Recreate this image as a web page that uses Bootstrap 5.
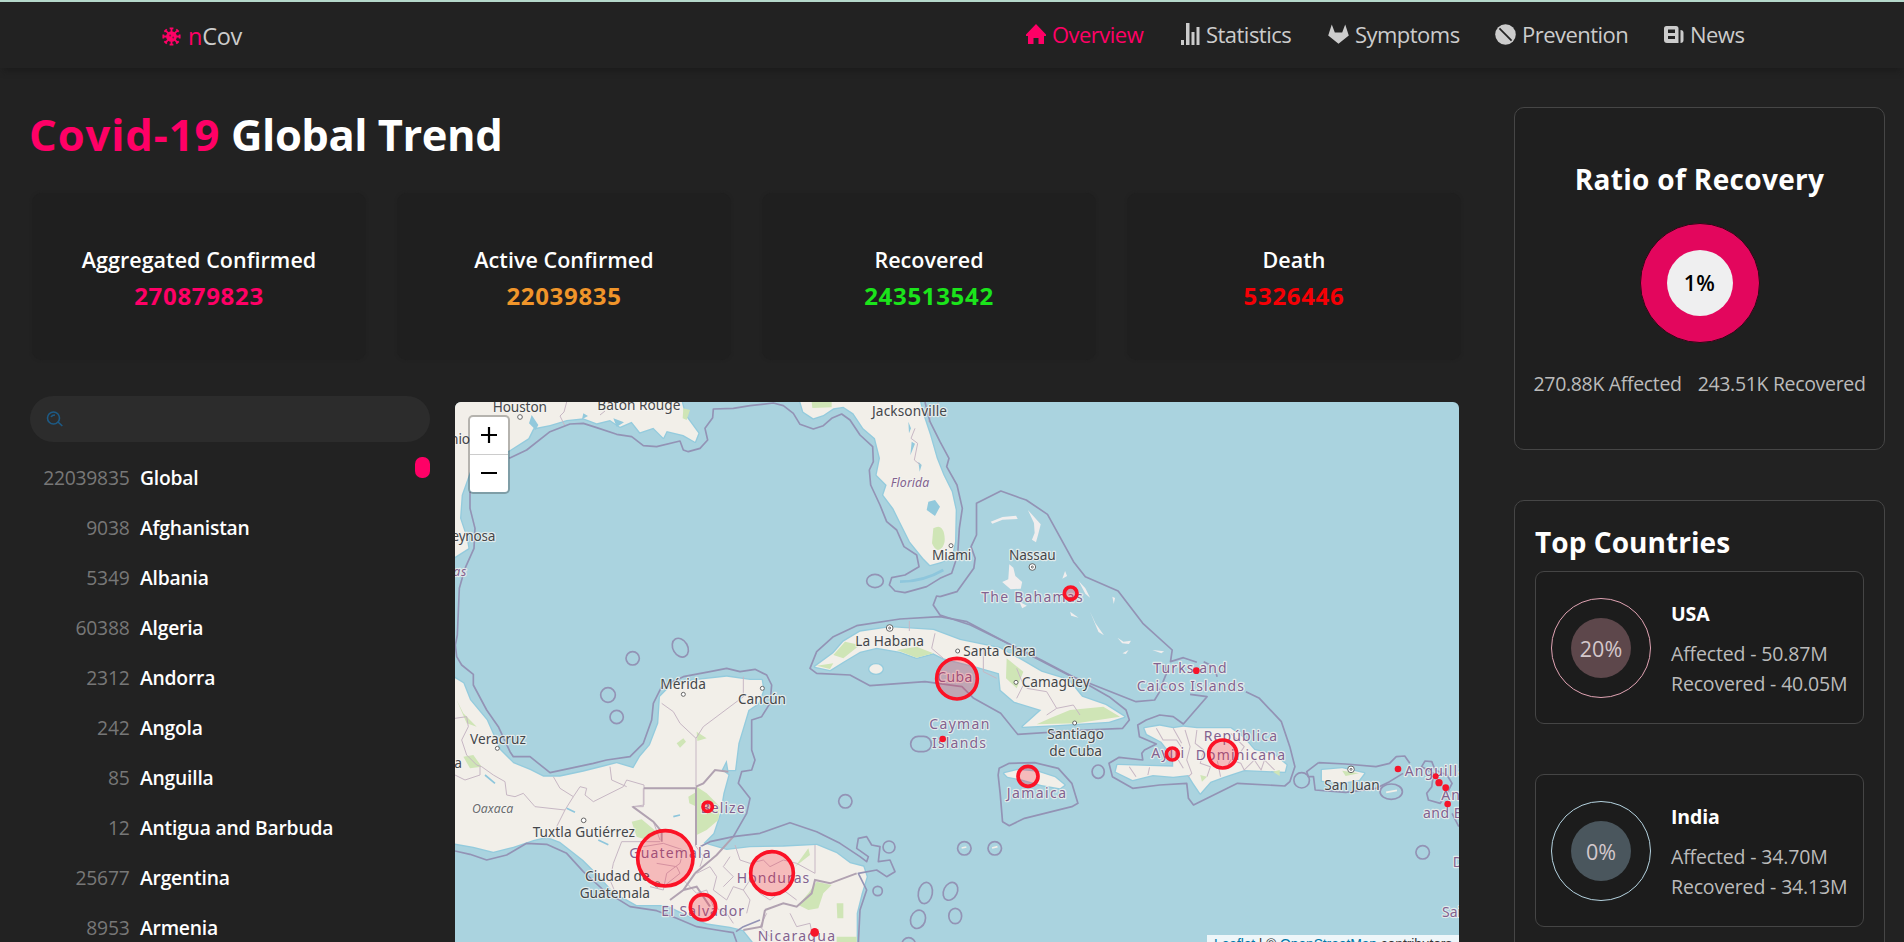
<!DOCTYPE html>
<html lang="en">
<head>
<meta charset="utf-8">
<title>nCov</title>
<link rel="stylesheet" href="https://cdn.jsdelivr.net/npm/bootstrap@5.3.0/dist/css/bootstrap.min.css">
<style>
:root{--pink:#ff0066}
body{background:#222;color:#fff;font-family:"Open Sans","Noto Sans",sans-serif;height:942px;overflow:hidden;letter-spacing:-.02em}
.topline{height:2px;background:#b5d8cb}
.site-nav{height:66px;padding:0 0 0 162px;box-shadow:0 7px 5px -3px #1d1d1d;position:relative}
.brand-link{font-size:23.5px;width:864px;gap:7px;color:#ccc;line-height:1;padding-top:3px;letter-spacing:-.012em}
.top-link{font-size:22px;gap:6px;color:#ccc;white-space:nowrap;letter-spacing:-.024em;padding-bottom:2px}
.top-link svg{flex:none}
.pink{color:var(--pink)!important}
.page-main{width:1477px;padding-left:17px}
.page-title{font-size:43.5px;line-height:52px;margin:41px 0 32px 12px;font-weight:700;letter-spacing:-.011em}
.page-title .pink{letter-spacing:.021em}
.stat-box{margin:0 16px 0 15px;height:167px;padding-top:49px;background:#1f1f1f;border-radius:10px;text-align:center;box-shadow:0 0 3px #202020}
.stat-box h2{font-size:21.5px;font-weight:600;line-height:36px;margin:0;letter-spacing:.002em}
.stat-box p{font-size:24px;font-weight:700;line-height:36px;margin:0;letter-spacing:.028em}
.side-list{width:400px;margin:36px 25px 0 13px}
.search-pill{height:45.5px;border-radius:23px;background:#2c2c2c;padding-left:16px}
.list-area{margin-top:11.5px;position:relative}
.list-row{height:50px;line-height:50px;font-size:19.3px;gap:10.5px}
.list-row span{width:99.5px;text-align:right;color:#777;letter-spacing:-.012em}
.list-row b{font-weight:650;letter-spacing:-.011em}
.thumb{position:absolute;right:0;top:4px;width:15px;height:21px;border-radius:7px;background:var(--pink)}
.map-box{width:1004px;height:540px;margin-top:42px;border-radius:6px 6px 0 0;overflow:hidden;position:relative;background:#aad3df}
.map-box>svg{display:block}
.zoom-ctl{position:absolute;left:13px;top:13px;width:42px;border:2px solid rgba(0,0,0,.25);border-radius:5px;background:#fff;background-clip:padding-box;overflow:hidden}
.zoom-ctl div{height:37.500px}
.zoom-ctl div:first-child{border-bottom:1px solid #ccc}
.attrib{position:absolute;right:0;bottom:-12px;height:19px;width:252px;padding-left:7px;background:rgba(255,255,255,.8);color:#333;font:14px/19px "Liberation Sans",sans-serif;letter-spacing:-.01em;white-space:nowrap}
.attrib a{color:#0078a8;text-decoration:none}
.page-aside{width:371px;margin-left:37px}
.content-area{height:874px;overflow:hidden}
.panel{border:1px solid #464646;border-radius:10px;background:#1f1f1f}
.panel h3{font-size:28px;font-weight:700;margin:0;line-height:36px;white-space:nowrap;letter-spacing:.002em}
.ratio-panel{height:343px;margin-top:39px;padding-top:53px}
.ratio-panel h3{letter-spacing:.012em}
.donut{width:120px;height:120px;border-radius:50%;background:#e3065d;border:1px solid #300716;margin:26px auto 0}
.donut div{width:66px;height:66px;border-radius:50%;background:#efeff0;color:#000;font-size:21.5px;font-weight:600;line-height:66px;letter-spacing:.01em}
.ratio-text{font-size:19.5px;line-height:30px;margin-top:26px;color:#bbb;gap:16px;white-space:nowrap;letter-spacing:-.017em}
.top-panel{height:500px;margin-top:50px;padding:23px 20px}
.country-box{border:1px solid #454545;border-radius:9px;background:#1c1c1c;height:152.500px;margin-bottom:50.500px;padding:1px 0 0 15px}
.ring{width:100px;height:100px;border-radius:50%;border:1px solid;margin-right:20px;flex:none}
.ring div{width:60px;height:60px;border-radius:50%;font-size:21.5px;line-height:62px;text-align:center;color:#d4c8cc;letter-spacing:0}
.country-text{font-size:19.5px;line-height:30px;color:#bbb;white-space:nowrap;letter-spacing:-.008em;padding-top:2px}
.country-text b{display:block;color:#fff;font-size:19.500px;margin-bottom:10px}
.lab text{font-family:"Noto Sans","Open Sans",sans-serif;font-size:41px;fill:#45474a;stroke:#f4f3f0;stroke-opacity:.75;stroke-width:7px;paint-order:stroke;stroke-linejoin:round;letter-spacing:0}
.lab .ctry{fill:#83628f;font-size:42px}
.lab .ital{font-style:italic;font-size:37px}
.sea{fill:none;stroke:#9393b5;stroke-width:5;stroke-linejoin:round}
.adm{fill:none;stroke:#c7b7c4;stroke-width:3;stroke-linejoin:round}
.bord{fill:none;stroke:#b1a2b1;stroke-width:6}
.land{fill:#f2efe9;stroke:#94cbdd;stroke-width:8;stroke-linejoin:round;paint-order:stroke}
.grn{fill:#cfe5b6}
.pin{fill:#ff1e33;fill-opacity:.25;stroke:#fb1226;stroke-width:11}
.dot{fill:#f6142a}
.town{fill:#fff;stroke:#666;stroke-width:3}
</style>
</head>
<body>
<div class="topline"></div>
<nav class="site-nav d-flex align-items-center">
  <a class="brand-link d-flex align-items-center text-decoration-none" href="#">
    <svg width="19" height="19" viewBox="0 0 20 20" fill="none" stroke="#ff0066" stroke-width="2.1"><circle cx="10" cy="10" r="4.6" fill="#ff0066"/><path d="M10 1v18M1 10h18M3.6 3.6l12.8 12.8M16.4 3.6 3.6 16.4M8 1.4h4M8 18.6h4M1.4 8v4M18.6 8v4M2.5 5l2.6-2.6M15 2.4 17.6 5M2.5 15l2.6 2.6M15 17.6l2.6-2.6" stroke-width="1.9"/><circle cx="8.6" cy="9" r="1" fill="#7b153e" stroke="none"/><circle cx="11.8" cy="11" r="1" fill="#7b153e" stroke="none"/></svg>
    <span><span class="pink">n</span>Cov</span>
  </a>
  <a class="top-link pink d-flex align-items-center text-decoration-none" style="width:155px" href="#"><svg width="20" height="20" viewBox="0 0 20 20" fill="currentColor"><path d="M10 0 20 10.5V12h-2v8h-5.500v-6h-5v6H2v-8H0v-1.500z"/></svg>Overview</a>
  <a class="top-link d-flex align-items-center text-decoration-none" style="width:147px" href="#"><svg width="19" height="22" viewBox="0 0 19 22" fill="currentColor"><path d="M0 17h3v5H0zM5 0h3.500v22H5zM10.500 9h3v13h-3zM15.500 4h3v18h-3z"/></svg>Statistics</a>
  <a class="top-link d-flex align-items-center text-decoration-none" style="width:167px" href="#"><svg width="21" height="20" viewBox="0 0 20 19" fill="currentColor"><path d="M3.600.5 6.500 8h7L16.400.5 19.800 11 10 18.800.2 11z"/></svg>Symptoms</a>
  <a class="top-link d-flex align-items-center text-decoration-none" style="width:169px" href="#"><svg width="21" height="21" viewBox="0 0 20 20"><circle cx="10" cy="10" r="9.800" fill="currentColor"/><path d="m4.200 4.200 11.600 11.600" stroke="#222" stroke-width="1.700"/></svg>Prevention</a>
  <a class="top-link d-flex align-items-center text-decoration-none" href="#"><svg width="20" height="17" viewBox="0 0 20 17" fill="currentColor"><path fill-rule="evenodd" d="M2.500 0H12q2.500 0 2.500 2.500V17H3q-3 0-3-3V2.500Q0 0 2.500 0zM4 3.500V7h7V3.500zM4 10v3h7v-3z"/><path d="M16.500 4Q19.500 4 19.500 7v7q0 3-3 3z"/></svg>News</a>
</nav>

<div class="content-area d-flex align-items-start">
<main class="page-main">
  <h1 class="page-title"><span class="pink">Covid-19</span> Global Trend</h1>
  <div class="row g-0">
    <div class="col-3"><div class="stat-box"><h2>Aggregated Confirmed</h2><p class="pink">270879823</p></div></div>
    <div class="col-3"><div class="stat-box"><h2>Active Confirmed</h2><p style="color:#f0952a">22039835</p></div></div>
    <div class="col-3"><div class="stat-box"><h2>Recovered</h2><p style="color:#1be41b">243513542</p></div></div>
    <div class="col-3"><div class="stat-box"><h2>Death</h2><p style="color:#f50005">5326446</p></div></div>
  </div>
  <div class="d-flex">
    <section class="side-list">
      <div class="search-pill d-flex align-items-center">
        <svg width="17" height="16" viewBox="0 0 17 16" fill="none" stroke="#1d5a85" stroke-width="1.600"><circle cx="7.500" cy="7" r="6"/><path d="m12 11 4.300 4M5 6q1-2 4-2"/></svg>
      </div>
      <div class="list-area">
        <div class="thumb"></div>
        <div class="list-row d-flex"><span>22039835</span><b>Global</b></div>
        <div class="list-row d-flex"><span>9038</span><b>Afghanistan</b></div>
        <div class="list-row d-flex"><span>5349</span><b>Albania</b></div>
        <div class="list-row d-flex"><span>60388</span><b>Algeria</b></div>
        <div class="list-row d-flex"><span>2312</span><b>Andorra</b></div>
        <div class="list-row d-flex"><span>242</span><b>Angola</b></div>
        <div class="list-row d-flex"><span>85</span><b>Anguilla</b></div>
        <div class="list-row d-flex"><span>12</span><b>Antigua and Barbuda</b></div>
        <div class="list-row d-flex"><span>25677</span><b>Argentina</b></div>
        <div class="list-row d-flex"><span>8953</span><b>Armenia</b></div>
      </div>
    </section>
    <section class="map-box">
      <svg width="1004" height="540" viewBox="15 21 3012 1620">
        <!-- Gulf coast and Florida -->
        <path class="land" d="M0 0H690L705 60 745 115 735 140 700 120 650 108 640 128 610 98 570 112 545 80 510 95 480 75 440 85 400 70 350 75 300 90 250 100 235 130 180 165 60 230 35 300 30 370 50 430 55 460 0 495z"/>
        <path class="land" d="M1045 0 1060 50 1090 70 1120 60 1150 40 1180 35 1210 55 1240 100 1275 130 1290 190 1280 240 1310 270 1300 300 1330 340 1350 380 1380 440 1420 490 1440 510 1475 500 1505 485 1515 440 1517 345 1505 290 1480 240 1460 190 1440 120 1420 60 1405 0z"/>
        <path class="grn" d="M1085 21h60v16l-58 2zM1450 400q25-15 32 15t-8 45-28-15zM700 40l20 5-10 30-12-5z"/>
        <path d="M1435 320l20-5 15 20-15 28-25-18zM1375 80l8 20-6 15zM1385 140l10 6-14 35zM245 60l20 30-8 15-20-20zM400 55l14 8-18 10zM490 70l32 12-22 14zM1405 200l10 10-6 20z" fill="#92c9dc"/>
        <path class="adm" d="M350 21l-8 30-12 12 15 30M450 60l15-12M1465 21l-30 60M1395 100l-12 30 20 15-10 50 18 15"/>
        <path d="M1350 560q70 0 130-35" stroke="#8ec6dc" fill="none" stroke-width="8"/>
        <path class="sea" d="M178 190 230 165 300 110 360 87 400 85 440 98 500 118 545 125 580 152 620 155 690 138 700 165 715 170 750 160 773 135 765 100 788 68 790 42 850 40 900 32 970 24 1000 32 1030 55 1050 88 1090 102 1120 92 1145 70 1175 57 1200 75 1230 120 1268 155 1270 200 1258 225 1262 270 1290 330 1310 380 1340 405 1362 455 1400 480 1407 515 1365 540 1325 548 1318 570 1335 588 1365 593 1430 575 1470 550 1505 535 1523 480 1528 400 1537 340 1521 270 1490 215 1497 190 1470 140 1440 80 1425 21"/>
        <path class="sea" d="M60 290V340L75 400 72 460 45 520 28 580 22 720 16 750 20 785 35 810 70 838V870L110 945 145 995 180 1070 190 1085H240L300 1133 430 1105 470 1095 540 1085 580 1045 605 975 610 925 635 875 700 845 780 830 830 820 870 830 915 823 950 840 965 870 960 925 935 965 905 975V1065L915 1095 905 1125 875 1130 865 1165 900 1210 890 1255 850 1325"/>
        <!-- Mexico and Central America -->
        <g transform="translate(0 795)">
          <path class="land" d="M0 45 40 70 60 120 110 180 150 270 190 310 240 330 280 350 330 350 400 335 460 320 500 310 550 325 570 290 600 255 625 190 630 110 670 70 740 60 830 50 900 60 935 60 940 90 925 130 895 150 880 200 865 250 855 330 835 330 830 300 815 330 835 345 820 400 810 460 790 520 760 550 830 570 900 562 1000 560 1100 555 1160 580 1200 610 1240 620 1250 650 1235 700 1220 760V860H920L880 810 840 800 770 790 700 760 650 735 560 735 490 695 440 640 400 600 330 545 290 530 250 540 190 560 130 575 70 560 0 548z"/>
          <path class="grn" d="M740 380 770 400 810 440 805 480 770 510 740 525zM715 410 740 395V440L718 430zM545 485 575 478 625 520 590 540 560 530zM1100 665 1145 675 1120 700 1105 745 1075 750 1045 735 1075 700zM40 290 70 285 95 320 60 325zM740 215l30 20-28 8zM680 250l20-15 8 10-18 18zM1075 565l-40 55 45-35zM1160 830h60v20h-60zM20 120l20 40 40 40-30-10zM1160 730h20v45h-18z"/>
          <path class="adm" d="M15 175 50 170 55 200 35 240 50 285 80 315 95 320 130 345 165 365 170 405 195 410 220 400 255 440 345 450 370 410 330 385 310 350M345 450 320 500 330 530M370 410 390 380 410 385 405 405 430 425 520 380 530 360 582 375V435L548 440 610 485 630 540M480 320 485 360 530 380M635 130 670 155 690 190 738 235 760 200 880 110V50M738 235V380M15 345 45 360 90 345 90 320M545 440 580 440V385H735M515 545 490 610 480 660 495 695M515 545H630M855 555 870 600 900 610 940 600 960 620 1000 600 1040 610 1095 640 1095 555M740 640 780 620 800 650 790 690 830 720 850 680 880 690 900 660 930 700 960 720 1000 690 1040 720M600 680 640 690 650 640 690 610 700 570 640 550 580 560M700 660 740 700 770 690 790 740 830 760 850 790M735 555 760 590 750 620M620 610 680 620 690 640 640 680M890 760 900 720 880 690M950 760 930 800 960 830M1020 760 1040 800 1080 790 1090 840M840 590 820 620 850 650 820 680"/>
          <path class="bord" d="M582 385H738V555M738 380 760 370 795 330 835 335M735 640 800 585 850 530M548 440 610 485 635 515V545M735 640 700 690 660 720M945 750 1000 730 1040 740 1085 700 1095 660 1140 670 1220 640M945 750 935 800 880 810M700 690 740 680 780 740"/>
          <path class="sea" d="M15 573 60 583 110 600 170 585 230 550 290 553 350 580 400 635 460 690 540 740 620 752 680 775 740 800 800 810 850 818 860 846M850 530 930 520 1020 488 1100 515 1170 550 1230 590 1250 605 1255 590 1220 565 1225 535 1250 530 1265 555 1290 560 1285 605 1320 600 1335 635 1310 650 1280 630 1225 640 1250 690 1230 750 1225 850M850 530 780 545 750 560M858 815 880 800 930 780"/>
          <path d="M105 345l30 25M350 445l25 12M445 540l30 14M670 470l20-5" stroke="#8ec6dc" stroke-width="5" fill="none"/>
        </g>
        <!-- Cuba -->
        <path class="land" d="M1095 815 1150 775 1180 740 1230 710 1320 697 1450 705 1530 735 1650 760 1723 800 1774 830 1855 855 1896 905 1967 930 2023 965 1977 980 1825 990 1718 995 1774 945 1693 920 1652 885 1647 835 1580 815 1480 790 1450 775 1400 788 1350 770 1280 758 1230 770 1180 800 1140 825z"/>
        <path class="grn" d="M1150 780 1185 740 1230 750 1180 790zM1340 765 1400 755 1450 775 1400 788zM1100 812 1150 805 1140 822zM1860 945 1960 935 2010 965 1880 985 1760 988 1800 970zM1670 790 1720 830 1700 880 1668 850z"/>
        <path class="adm" d="M1378 678V708M1455 715 1445 760 1480 790M1600 760 1600 830 1640 850M1700 820 1720 870 1700 910M1730 880 1790 890 1820 940 1790 960M1820 940 1870 930 1890 960"/>
        <ellipse class="land" cx="1278" cy="822" rx="20" ry="14"/>
        <path class="sea" d="M1080 820 1100 770 1150 725 1220 692 1350 672 1470 665 1551 680 1673 745 1774 795 1906 865 1977 905 2028 945 2038 975 2018 1000 1906 1005 1703 1018 1652 955 1571 910 1536 875 1425 860 1260 872 1200 840 1100 835z"/>
        <!-- Bahamas -->
        <g transform="translate(1470 0) scale(1.014 1)">
          <path class="sea" d="M0 605 50 590 100 520 104 490 92 455 108 420V325L180 288 235 308 255 315 318 358 395 500 430 545 527 588 600 685 687 765 682 800 720 788 760 802M0 605-10 603-20 630 0 660 90 690 200 745 380 840 580 920 635 915 650 890"/>
          <path d="M150 380l35-14 40-4 5 10-45 2-30 12zM260 345l22 25 16 18-8 32-6 22-12-8 8-20-2-30zM205 508l12 10 6 25 20 18-4 20-30 2-25-22 18-8zM370 528l6 15-14 8zM410 558l20 22 14 28-14-12zM444 650l16 35 25 36-16-10zM525 728l18 12 22-3-6 10-20-2zM628 765l35 4-8 6zM510 605l8 4-4 18zM385 650l25 18-22-6zM540 775l18-10-8 12zM235 620l22 12-14 8z" fill="#f1eeee"/>
        </g>
        <!-- Greater Antilles -->
        <g transform="translate(1470 795) scale(1.014 1)">
          <path class="land" d="M605 205 650 197 690 205 720 200 760 205 860 205 900 235 930 270 990 285 1025 315 1020 335 900 330 840 350 800 365 770 400 750 370 735 345 690 350 630 345 570 360 520 335 525 315 620 318 690 320 690 290 655 245 612 222z"/>
          <path class="land" d="M1130 330 1190 325 1255 340 1240 360 1190 368 1130 362zM190 340 230 330 290 335 340 352 368 375 355 385 300 375 240 358 200 350z"/>
          <path class="grn" d="M985 335l20-5v18zM1190 332l50 8-40 8zM460 180l10-5zM770 345l20 5-15 15z"/>
          <path class="adm" d="M640 205 660 240 700 240 720 270M690 205 715 250M725 210 740 260 730 300 745 340 735 350M760 210 755 250 780 270 770 310 800 320 790 350M850 320 860 300 890 310 900 330 930 300 950 330 960 300 990 330M560 320 580 350M620 322 615 345M860 220 900 260 880 290M820 300 830 350M705 300 720 325"/>
          <path class="sea" d="M905 95 945 115 1010 185 1035 260 1050 320 1035 365 1020 378 880 370 750 435 735 415 730 370 650 375 570 385 510 350 500 310 530 292 600 300 597 280 605 270 640 252 590 230 585 195 610 180 650 165 690 170 720 192 790 110 740 103M820 50 810 20 780 5M650 90 670 40 665 15M175 325 205 310 280 308 350 325 390 370 408 430 390 440 250 475 205 497 185 485 178 400 172 345zM1120 308 1200 312 1290 320 1330 310 1350 290 1375 288 1390 310M1120 308 1085 335 1090 350 1105 350 1110 390 1200 397 1290 385 1330 365 1370 340M1440 400 1455 380 1460 340 1425 320 1435 303 1455 305 1465 330 1500 345 1515 370 1500 400 1480 430 1445 420zM1515 460 1535 500"/>
          <g class="sea"><ellipse cx="468" cy="335" rx="18" ry="20"/><circle cx="1070" cy="361" r="23"/><ellipse cx="1335" cy="395" rx="33" ry="23"/><circle cx="72" cy="565" r="20"/><circle cx="162" cy="565" r="20"/><circle cx="1428" cy="577" r="20"/><ellipse cx="31" cy="694" rx="20" ry="28" transform="rotate(25 31 694)"/><ellipse cx="45" cy="768" rx="19" ry="23"/></g>
          <path d="M1320 397l32-6M64 564l14-3M154 564l16-4" stroke="#f2efe9" stroke-width="5"/>
        </g>
        <g class="sea"><ellipse cx="1275" cy="558" rx="25" ry="20"/><circle cx="548" cy="790" r="20"/><ellipse cx="691" cy="758" rx="22" ry="30" transform="rotate(-30 691 758)"/><ellipse cx="474" cy="900" rx="22" ry="22"/><circle cx="500" cy="966" r="20"/><circle cx="1186" cy="1219" r="20"/><circle cx="1317" cy="1356" r="18"/><circle cx="1283" cy="1488" r="14"/><ellipse cx="1426" cy="1494" rx="21" ry="32" transform="rotate(10 1426 1494)"/><ellipse cx="1404" cy="1573" rx="22" ry="28" transform="rotate(20 1404 1573)"/><rect x="1382" y="1024" width="62" height="46" rx="23"/><circle cx="1376" cy="1648" r="20"/></g>

        <g class="lab">
          <text x="128" y="52" textLength="163">Houston</text>
          <text x="442" y="46" textLength="249">Baton Rouge</text>
          <text x="1266" y="62" textLength="225">Jacksonville</text>
          <text x="-24" y="146" textLength="84">onio</text>
          <text x="-20" y="439" textLength="156">Reynosa</text>
          <text x="10" y="542" class="ctry ital" textLength="39">as</text>
          <text x="1322" y="277" class="ctry ital" textLength="116">Florida</text>
          <text x="1446" y="495" textLength="118">Miami</text>
          <text x="1677" y="494" textLength="140">Nassau</text>
          <text x="1594" y="620" class="ctry" textLength="304">The Bahamas</text>
          <text x="1216" y="752" textLength="206">La Habana</text>
          <text x="1540" y="782" textLength="217">Santa Clara</text>
          <text x="1715" y="876" textLength="204">Camagüey</text>
          <text x="1792" y="1032" textLength="170">Santiago</text>
          <text x="1798" y="1084" textLength="158">de Cuba</text>
          <text x="1462" y="860" class="ctry" textLength="105">Cuba</text>
          <text x="2110" y="833" class="ctry" textLength="220">Turks and</text>
          <text x="2060" y="889" class="ctry" textLength="322">Caicos Islands</text>
          <text x="1438" y="1001" class="ctry" textLength="180">Cayman</text>
          <text x="1446" y="1058" class="ctry" textLength="162">Islands</text>
          <text x="1670" y="1209" class="ctry" textLength="178">Jamaica</text>
          <text x="2104" y="1088" class="ctry" textLength="98">Ayiti</text>
          <text x="2261" y="1038" class="ctry" textLength="220">República</text>
          <text x="2237" y="1095" class="ctry" textLength="268">Dominicana</text>
          <text x="2623" y="1184" textLength="166">San Juan</text>
          <text x="2864" y="1143" class="ctry" textLength="184">Anguilla</text>
          <text x="2974" y="1214" class="ctry" textLength="170">Antigua</text>
          <text x="2919" y="1270" class="ctry" textLength="270">and Barbuda</text>
          <text x="3008" y="1415" class="ctry">Dominica</text>
          <text x="2976" y="1565" class="ctry">Saint Lucia</text>
          <text x="631" y="882" textLength="137">Mérida</text>
          <text x="864" y="926" textLength="144">Cancún</text>
          <text x="60" y="1046" textLength="168">Veracruz</text>
          <text x="13" y="1118" textLength="20">a</text>
          <text x="66" y="1255" class="ital" fill-opacity=".8" textLength="124">Oaxaca</text>
          <text x="248" y="1326" textLength="307">Tuxtla Gutiérrez</text>
          <text x="752" y="1253" class="ctry" textLength="132">Belize</text>
          <text x="538" y="1389" class="ctry" textLength="244">Guatemala</text>
          <text x="405" y="1458" textLength="194">Ciudad de</text>
          <text x="389" y="1509" textLength="211">Guatemala</text>
          <text x="860" y="1464" class="ctry" textLength="218">Honduras</text>
          <text x="634" y="1564" class="ctry" textLength="248">El Salvador</text>
          <text x="923" y="1637" class="ctry" textLength="232">Nicaragua</text>
        </g>
        <g class="town"><circle cx="210" cy="66" r="7"/><circle cx="1503" cy="452" r="6"/><circle cx="1523" cy="768" r="6"/><circle cx="1698" cy="862" r="6"/><circle cx="1874" cy="984" r="6"/><circle cx="700" cy="898" r="6"/><circle cx="937" cy="880" r="6"/><circle cx="142" cy="1060" r="6"/><circle cx="401" cy="1276" r="7"/><circle cx="622" cy="1468" r="8"/><circle cx="1319" cy="699" r="10"/><circle cx="1319" cy="699" r="3"/><circle cx="1747" cy="516" r="10"/><circle cx="1747" cy="516" r="3"/><circle cx="2703" cy="1123" r="10"/><circle cx="2703" cy="1123" r="3"/></g>
        <!-- Case markers -->
        <g class="pin"><circle cx="646" cy="1390" r="83"/><circle cx="966" cy="1434" r="64"/><circle cx="759" cy="1537" r="38"/><circle cx="773" cy="1235" r="14"/><circle cx="1521" cy="851" r="61"/><circle cx="1862" cy="595" r="19"/><circle cx="1734" cy="1144" r="30"/><circle cx="2167" cy="1077" r="18"/><circle cx="2318" cy="1077" r="42"/></g>
        <g class="dot"><circle cx="1094" cy="1612" r="13"/><circle cx="1478" cy="1032" r="10"/><circle cx="2239" cy="827" r="10"/><circle cx="2844" cy="1122" r="10"/><circle cx="2957" cy="1144" r="9"/><circle cx="2967" cy="1163" r="11"/><circle cx="2987" cy="1178" r="10"/><circle cx="2993" cy="1227" r="10"/></g>
      </svg>
      <div class="zoom-ctl">
        <div class="d-flex align-items-center justify-content-center"><svg width="16" height="16" viewBox="0 0 16 16" stroke="#000" stroke-width="2.200"><path d="M0 8h16M8 0v16"/></svg></div>
        <div class="d-flex align-items-center justify-content-center"><svg width="16" height="16" viewBox="0 0 16 16" stroke="#000" stroke-width="2.200"><path d="M0 8h16"/></svg></div>
      </div>
      <div class="attrib"><a href="#">Leaflet</a> | © <a href="#">OpenStreetMap</a> contributors</div>
    </section>
  </div>
</main>

<aside class="page-aside">
  <div class="panel ratio-panel text-center">
    <h3>Ratio of Recovery</h3>
    <div class="donut d-flex align-items-center justify-content-center"><div>1%</div></div>
    <div class="ratio-text d-flex justify-content-center"><span>270.88K Affected</span><span>243.51K Recovered</span></div>
  </div>
  <div class="panel top-panel">
    <h3 style="margin-bottom:11px">Top Countries</h3>
    <div class="country-box d-flex align-items-center">
      <div class="ring d-flex align-items-center justify-content-center" style="border-color:#e0a3b3"><div style="background:#5d474b">20%</div></div>
      <div class="country-text"><b>USA</b>Affected - 50.87M<br>Recovered - 40.05M</div>
    </div>
    <div class="country-box d-flex align-items-center">
      <div class="ring d-flex align-items-center justify-content-center" style="border-color:#b5d3e0"><div style="background:#4a565d">0%</div></div>
      <div class="country-text"><b>India</b>Affected - 34.70M<br>Recovered - 34.13M</div>
    </div>
  </div>
</aside>
</div>
<script src="https://cdn.jsdelivr.net/npm/bootstrap@5.3.0/dist/js/bootstrap.bundle.min.js"></script>
</body>
</html>
